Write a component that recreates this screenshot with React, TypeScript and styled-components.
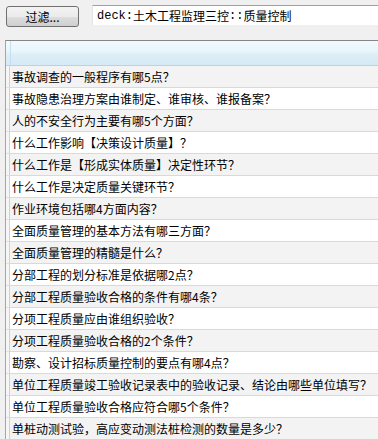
import styled, { createGlobalStyle } from "styled-components";

const Global = createGlobalStyle`
  html, body {
    margin: 0;
    padding: 0;
    background: #f0f0f0;
    overflow: hidden;
  }
`;

const Page = styled.div`
  width: 378px;
  height: 439px;
  background: #f0f0f0;
  font-family: "Noto Sans CJK SC", "Noto Sans", sans-serif;
  font-size: 12px;
  color: #000;
  overflow: hidden;
`;

const Toolbar = styled.div`
  display: flex;
  align-items: flex-start;
  gap: 13px;
  padding: 5px 0 0 6px;
  height: 35px;
  box-sizing: border-box;
`;

const FilterButton = styled.button`
  width: 73px;
  height: 21px;
  margin-top: 1px;
  padding: 0 0 0 0;
  border: 1px solid #707070;
  border-radius: 3px;
  background: linear-gradient(#f3f3f3 0%, #ebebeb 50%, #dddddd 51%, #cfcfcf 100%);
  font-family: "Noto Sans CJK SC", sans-serif;
  font-size: 12px;
  line-height: 18px;
  color: #000;
  text-align: center;
`;

const Search = styled.div`
  flex: 1;
  height: 20px;
  background: #fff;
  border-top: 1px solid #a0a0a0;
  border-left: 1px solid #e3e3e3;
  box-sizing: border-box;
  padding-left: 4px;
  display: flex;
  align-items: center;
  white-space: nowrap;
  overflow: hidden;
`;

const Mono = styled.span`
  font-family: "Liberation Mono", "DejaVu Sans Mono", monospace;
  font-size: 12px;
`;

const Table = styled.div`
  margin-left: 5px;
  margin-top: 5px;
  border-top: 1px solid #868686;
  border-left: 1px solid #a5a5a5;
  background: #fff;
`;

const Header = styled.div`
  display: flex;
  height: 24px;
  background: linear-gradient(#f1fafe 0%, #e9f6fc 40%, #dcedf6 60%, #d6eaf5 100%);
  border-bottom: 1px solid #b1d6e9;
`;

const Corner = styled.div`
  width: 4px;
  border-right: 1px solid #c5dfee;
`;

const Row = styled.div<{ $odd: boolean }>`
  display: flex;
  height: 22px;
`;

const Stub = styled.div`
  width: 3px;
  background: #f6f6f6;
  border-right: 1px solid #d0d0d0;
  border-bottom: 1px solid #e0e0e0;
`;

const Cell = styled.div<{ $odd: boolean }>`
  flex: 1;
  box-sizing: border-box;
  border-bottom: 1px solid #d9d9d9;
  background: ${(p) => (p.$odd ? "#f3f3f3" : "#ffffff")};
  padding-left: 2px;
  line-height: 21px;
  white-space: nowrap;
  overflow: hidden;
`;

const questions = [
  "事故调查的一般程序有哪5点？",
  "事故隐患治理方案由谁制定、谁审核、谁报备案？",
  "人的不安全行为主要有哪5个方面？",
  "什么工作影响【决策设计质量】？",
  "什么工作是【形成实体质量】决定性环节？",
  "什么工作是决定质量关键环节？",
  "作业环境包括哪4方面内容？",
  "全面质量管理的基本方法有哪三方面？",
  "全面质量管理的精髓是什么？",
  "分部工程的划分标准是依据哪2点？",
  "分部工程质量验收合格的条件有哪4条？",
  "分项工程质量应由谁组织验收？",
  "分项工程质量验收合格的2个条件？",
  "勘察、设计招标质量控制的要点有哪4点？",
  "单位工程质量竣工验收记录表中的验收记录、结论由哪些单位填写？",
  "单位工程质量验收合格应符合哪5个条件？",
  "单桩动测试验，高应变动测法桩检测的数量是多少？",
];

export default function App() {
  return (
    <Page>
      <Global />
      <Toolbar>
        <FilterButton>过滤...</FilterButton>
        <Search>
          <Mono>deck:</Mono>土木工程监理三控<Mono>::</Mono>质量控制
        </Search>
      </Toolbar>
      <Table>
        <Header>
          <Corner />
        </Header>
        {questions.map((q, i) => (
          <Row key={i} $odd={i % 2 === 0}>
            <Stub />
            <Cell $odd={i % 2 === 0}>{q}</Cell>
          </Row>
        ))}
      </Table>
    </Page>
  );
}
